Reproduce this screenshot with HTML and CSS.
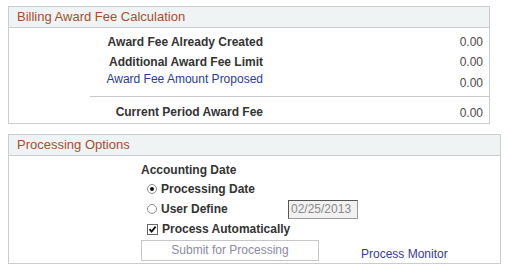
FILE: index.html
```html
<!DOCTYPE html>
<html>
<head>
<meta charset="utf-8">
<link rel="stylesheet" href="styles.css">
</head>
<body>
<div class="page">
  <section class="group group-calc">
    <div class="group-head">Billing Award Fee Calculation</div>
    <div class="calc-body">
      <div class="row"><span class="lbl">Award Fee Already Created</span><span class="val">0.00</span></div>
      <div class="row"><span class="lbl">Additional Award Fee Limit</span><span class="val">0.00</span></div>
      <div class="row row-link"><span class="lbl link">Award Fee Amount Proposed</span><span class="val">0.00</span></div>
      <div class="rule"></div>
      <div class="row row-total"><span class="lbl">Current Period Award Fee</span><span class="val">0.00</span></div>
    </div>
  </section>

  <section class="group group-proc">
    <div class="group-head">Processing Options</div>
    <div class="proc-body">
      <div class="acct">Accounting Date</div>
      <div class="opt opt-first">
        <span class="radio checked"></span><span class="optlbl">Processing Date</span>
      </div>
      <div class="opt">
        <span class="radio"></span><span class="optlbl optlbl-user">User Define</span>
        <span class="datebox">02/25/2013</span>
      </div>
      <div class="opt">
        <span class="check"><svg width="9" height="9" viewBox="0 0 9 9"><path d="M1.5 4.2 L3.6 6.6 L7.6 1.6" fill="none" stroke="#111" stroke-width="1.8"/></svg></span><span class="optlbl">Process Automatically</span>
      </div>
      <div class="btnrow">
        <span class="btn">Submit for Processing</span>
        <span class="monitor">Process Monitor</span>
      </div>
    </div>
  </section>
</div>
</body>
</html>
```
FILE: styles.css
```css
html, body {
  margin: 0;
  padding: 0;
  background: #ffffff;
}
body {
  font-family: "Liberation Sans", Arial, sans-serif;
  font-size: 12px;
  color: #333333;
}
.page {
  padding: 6px 0 0 8px;
}
.group {
  border: 1px solid #c9ccd0;
  box-sizing: border-box;
  background: #ffffff;
}
.group-calc {
  width: 482px;
  height: 118px;
}
.group-proc {
  width: 493px;
  height: 130px;
  margin-top: 10px;
}
.group-head {
  height: 20px;
  line-height: 20px;
  background: #f0f3f4;
  border-bottom: 1px solid #c9ccd0;
  color: #a4502c;
  font-size: 13px;
  padding-left: 8px;
}
.calc-body {
  padding-top: 4px;
}
.row {
  display: grid;
  grid-template-columns: 254px 220px;
  height: 20px;
  align-items: center;
}
.lbl {
  text-align: right;
  font-weight: bold;
  color: #333333;
}
.lbl.link {
  font-weight: normal;
  color: #2a3a9e;
}
.val {
  text-align: right;
  color: #4a4a4a;
}
.row-link {
  align-items: start;
}
.row-link .val {
  margin-top: 4px;
}
.rule {
  margin: 4px 0 0 81px;
  height: 1px;
  background: #c5c8cc;
}
.row-total {
  margin-top: 5px;
}
.row-total .val {
  margin-top: 2px;
}
.proc-body {
  padding: 6px 0 0 132px;
}
.acct {
  font-weight: bold;
  height: 16px;
  line-height: 16px;
}
.opt {
  display: flex;
  align-items: center;
  height: 20px;
  padding-left: 6px;
}
.opt-first {
  margin-top: 1px;
}
.radio {
  width: 10px;
  height: 10px;
  border-radius: 50%;
  box-sizing: border-box;
  border: 1px solid #8d8d8d;
  background: #ffffff;
  position: relative;
}
.radio.checked::after {
  content: "";
  position: absolute;
  left: 2px;
  top: 2px;
  width: 4px;
  height: 4px;
  border-radius: 50%;
  background: #111111;
}
.check {
  width: 11px;
  height: 11px;
  box-sizing: border-box;
  border: 1px solid #666666;
  background: #ffffff;
  display: flex;
  align-items: center;
  justify-content: center;
}
.check svg {
  display: block;
}
.optlbl {
  font-weight: bold;
  margin-left: 4px;
}
.optlbl-user {
  width: 127px;
}
.datebox {
  width: 70px;
  height: 19px;
  box-sizing: border-box;
  border: 1px solid #9a9a9a;
  border-top-color: #555555;
  border-left-color: #555555;
  background: #f1f1f1;
  color: #8a8a8a;
  line-height: 17px;
  padding-left: 2px;
  font-size: 12px;
}
.btnrow {
  display: flex;
  align-items: flex-end;
  margin-top: 1px;
}
.btn {
  width: 178px;
  height: 21px;
  box-sizing: border-box;
  border: 1px solid #c6c6c6;
  background: #ffffff;
  color: #8a8aa0;
  text-align: center;
  line-height: 19px;
}
.monitor {
  margin-left: 42px;
  color: #3a3a96;
  line-height: 14px;
}
```
